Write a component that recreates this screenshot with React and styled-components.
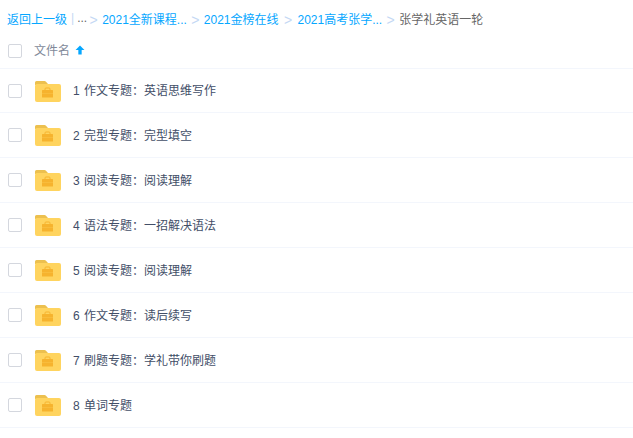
import React from 'react';
import styled, { createGlobalStyle } from 'styled-components';

const GlobalStyle = createGlobalStyle`
  html, body {
    margin: 0;
    padding: 0;
    background: #fff;
  }
`;

const Page = styled.div`
  width: 633px;
  height: 438px;
  overflow: hidden;
  background: #fff;
  font-family: "Liberation Sans", "Noto Sans CJK SC", sans-serif;
  font-size: 12px;
  color: #424e67;
`;

const Breadcrumb = styled.div`
  display: flex;
  align-items: center;
  height: 36px;
  padding-left: 7px;
  white-space: nowrap;
  color: #666;
`;

const CrumbLink = styled.a`
  color: #06a7ff;
`;

const Divider = styled.span`
  color: #c4d8f4;
  margin: 0 3px 0 4px;
`;

const Ellipsis = styled.span`
  margin-right: -2px;
`;

const Arrow = styled.span`
  color: #c4d8f4;
  margin: 3px ${(p) => (p.$wide ? 5.4 : 4.4)}px 0;
  font-size: 14px;
`;

const HeaderRow = styled.div`
  display: flex;
  align-items: center;
  height: 32px;
  padding: 0 0 3px 8px;
  box-sizing: border-box;
  color: #818999;
`;

const Checkbox = styled.span`
  display: block;
  flex: none;
  width: 14px;
  height: 14px;
  box-sizing: border-box;
  border: 1px solid #d4d7de;
  border-radius: 2px;
  background: #fff;
`;

const HeaderLabel = styled.span`
  margin: 0 0 2px 12px;
`;

const SortIcon = styled.svg`
  margin: 0 0 2px 5px;
  width: 10px;
  height: 10px;
`;

const List = styled.div`
  border-top: 1px solid #f3f6fc;
`;

const Row = styled.div`
  display: flex;
  align-items: center;
  height: 45px;
  padding-left: 8px;
  border-bottom: 1px solid #f3f6fc;
  box-sizing: border-box;

  &:first-child {
    height: 44px;
  }
`;

const FolderIcon = styled.svg`
  flex: none;
  width: 26px;
  height: 21px;
  margin: 1px 0 0 13px;
`;

const RowName = styled.span`
  margin: 0 0 2px 12px;
  word-spacing: 1px;
`;

const Folder = () => (
  <FolderIcon viewBox="0 0 26 21">
    <path d="M0 4V1.500A1.500 1.500 0 0 1 1.500 0H9.500a2 2 0 0 1 1.500.7L13 3v1z" fill="#ecc04f" />
    <rect x="0" y="3" width="26" height="18" rx="2" fill="#ffd45f" />
    <path d="M10 9V8a1 1 0 0 1 1-1h3a1 1 0 0 1 1 1v1" fill="none" stroke="#f6b32e" strokeWidth="1" />
    <rect x="7" y="9" width="11" height="7.500" rx="0.500" fill="#f6b32e" />
    <rect x="7" y="12" width="11" height="0.500" fill="#fbc44a" />
  </FolderIcon>
);

const files = [
  '1 作文专题：英语思维写作',
  '2 完型专题：完型填空',
  '3 阅读专题：阅读理解',
  '4 语法专题：一招解决语法',
  '5 阅读专题：阅读理解',
  '6 作文专题：读后续写',
  '7 刷题专题：学礼带你刷题',
  '8 单词专题',
];

const App = () => (
  <Page>
    <GlobalStyle />
    <Breadcrumb>
      <CrumbLink>返回上一级</CrumbLink>
      <Divider>|</Divider>
      <Ellipsis>...</Ellipsis>
      <Arrow>&gt;</Arrow>
      <CrumbLink>2021全新课程...</CrumbLink>
      <Arrow>&gt;</Arrow>
      <CrumbLink>2021金榜在线</CrumbLink>
      <Arrow $wide>&gt;</Arrow>
      <CrumbLink>2021高考张学...</CrumbLink>
      <Arrow>&gt;</Arrow>
      <span>张学礼英语一轮</span>
    </Breadcrumb>
    <HeaderRow>
      <Checkbox />
      <HeaderLabel>文件名</HeaderLabel>
      <SortIcon viewBox="0 0 9 9">
        <path d="M4.500 0.500 L8.500 4.500 H6 V8.500 H3 V4.500 H0.500 Z" fill="#06a7ff" />
      </SortIcon>
    </HeaderRow>
    <List>
      {files.map((name) => (
        <Row key={name}>
          <Checkbox />
          <Folder />
          <RowName>{name}</RowName>
        </Row>
      ))}
    </List>
  </Page>
);

export default App;
